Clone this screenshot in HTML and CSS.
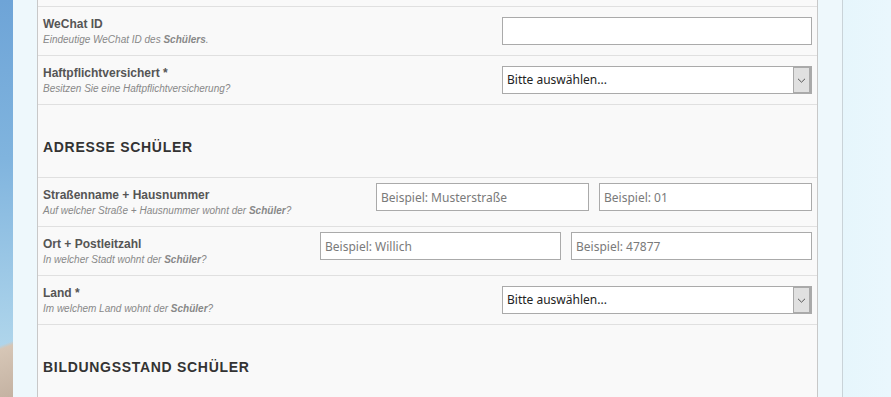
FILE: index.html
```html
<!DOCTYPE html>
<html lang="de">

<head>
    <meta charset="UTF-8">
    <meta name="viewport" content="width=device-width, initial-scale=1.0">
    <link rel="stylesheet" href="styles.css">
</head>

<body>
    <div class="page">
        <div class="side-left"></div>
        <div class="frame">
            <div class="panel">
                <div class="row-cut"></div>

                <div class="row">
                    <div class="label">
                        <div class="title">WeChat ID</div>
                        <div class="desc">Eindeutige WeChat ID des <b>Schülers</b>.</div>
                    </div>
                    <input class="field" type="text">
                </div>

                <div class="row">
                    <div class="label">
                        <div class="title">Haftpflichtversichert *</div>
                        <div class="desc">Besitzen Sie eine Haftpflichtversicherung?</div>
                    </div>
                    <div class="field select">
                        <span class="select-text">Bitte auswählen...</span>
                        <span class="select-btn">
                            <svg width="9" height="5" viewBox="0 0 9 5"><path d="M1 0.8 L4.5 4.2 L8 0.8" fill="none" stroke="#555" stroke-width="1"/></svg>
                        </span>
                    </div>
                </div>

                <div class="section">
                    <h2>Adresse Schüler</h2>
                </div>

                <div class="row">
                    <div class="label">
                        <div class="title">Straßenname + Hausnummer</div>
                        <div class="desc">Auf welcher Straße + Hausnummer wohnt der <b>Schüler</b>?</div>
                    </div>
                    <div class="pair pair-narrow">
                        <input class="field" type="text" placeholder="Beispiel: Musterstraße">
                        <input class="field" type="text" placeholder="Beispiel: 01">
                    </div>
                </div>

                <div class="row">
                    <div class="label">
                        <div class="title">Ort + Postleitzahl</div>
                        <div class="desc">In welcher Stadt wohnt der <b>Schüler</b>?</div>
                    </div>
                    <div class="pair pair-wide">
                        <input class="field" type="text" placeholder="Beispiel: Willich">
                        <input class="field" type="text" placeholder="Beispiel: 47877">
                    </div>
                </div>

                <div class="row">
                    <div class="label">
                        <div class="title">Land *</div>
                        <div class="desc">Im welchem Land wohnt der <b>Schüler</b>?</div>
                    </div>
                    <div class="field select">
                        <span class="select-text">Bitte auswählen...</span>
                        <span class="select-btn">
                            <svg width="9" height="5" viewBox="0 0 9 5"><path d="M1 0.8 L4.5 4.2 L8 0.8" fill="none" stroke="#555" stroke-width="1"/></svg>
                        </span>
                    </div>
                </div>

                <div class="section">
                    <h2>Bildungsstand Schüler</h2>
                </div>
            </div>
        </div>
        <div class="side-right"></div>
    </div>
</body>

</html>
```

FILE: styles.css
```css
html,
body {
    margin: 0;
    padding: 0;
    height: 100%;
    overflow: hidden;
}

body {
    font-family: "Liberation Sans", Arial, sans-serif;
    background: #e8f6fc;
}

.page {
    display: flex;
    height: 100%;
}

/* Hintergrundbild links */
.side-left {
    width: 13px;
    flex: none;
    background:
        linear-gradient(160deg, rgba(0, 0, 0, 0) 86%, #d6c6b6 87%, #c4b2a2 100%),
        linear-gradient(180deg, #6ea4d7 0%, #80b4de 40%, #a3cde8 75%, #bcdeee 100%);
}

.frame {
    flex: none;
    padding: 0 24px;
    background: #eef8fc;
    border-right: 1px solid #c9d3d8;
}

.side-right {
    flex: 1;
    background: linear-gradient(90deg, #e6f6fc, #eaf7fd);
}

.panel {
    width: 779px;
    height: 100%;
    background: #f9f9f9;
    border-left: 1px solid #c8c8c8;
    border-right: 1px solid #c8c8c8;
}

.row-cut {
    height: 6px;
}

.row {
    display: flex;
    align-items: center;
    justify-content: space-between;
    height: 48px;
    padding: 0 5px;
    border-top: 1px solid #e0e0e0;
}

.label .title {
    font-size: 12px;
    line-height: 15px;
    font-weight: bold;
    color: #555;
}

.label .desc {
    margin-top: 1px;
    font-size: 10px;
    line-height: 13px;
    font-style: italic;
    color: #888;
}

.field {
    box-sizing: border-box;
    width: 310px;
    height: 28px;
    margin: 0;
    padding: 0 4px;
    border: 1px solid #aaa;
    background: #fff;
    font-family: "Noto Sans", sans-serif;
    font-size: 12px;
    color: #333;
    outline: none;
}

.field::placeholder {
    color: #7a7a7a;
}

/* Doppelfelder sitzen oben in der Zeile */
.pair {
    display: flex;
    gap: 10px;
    align-self: flex-start;
    margin-top: 5px;
}

.pair-narrow .field {
    width: 213px;
}

.pair-wide .field {
    width: 241px;
}

.select {
    display: flex;
    align-items: stretch;
    padding: 0;
}

.select-text {
    flex: 1;
    padding-left: 4px;
    line-height: 26px;
    color: #222;
}

.select-btn {
    display: flex;
    align-items: center;
    justify-content: center;
    width: 15px;
    background: #e0e0e0;
    border: 1px solid #a9a9a9;
    border-right-width: 2px;
}

.section {
    padding: 34px 5px 22px;
    border-top: 1px solid #e0e0e0;
}

.section h2 {
    margin: 0;
    font-size: 14px;
    line-height: 16px;
    font-weight: bold;
    letter-spacing: 0.7px;
    text-transform: uppercase;
    color: #333;
}
```
